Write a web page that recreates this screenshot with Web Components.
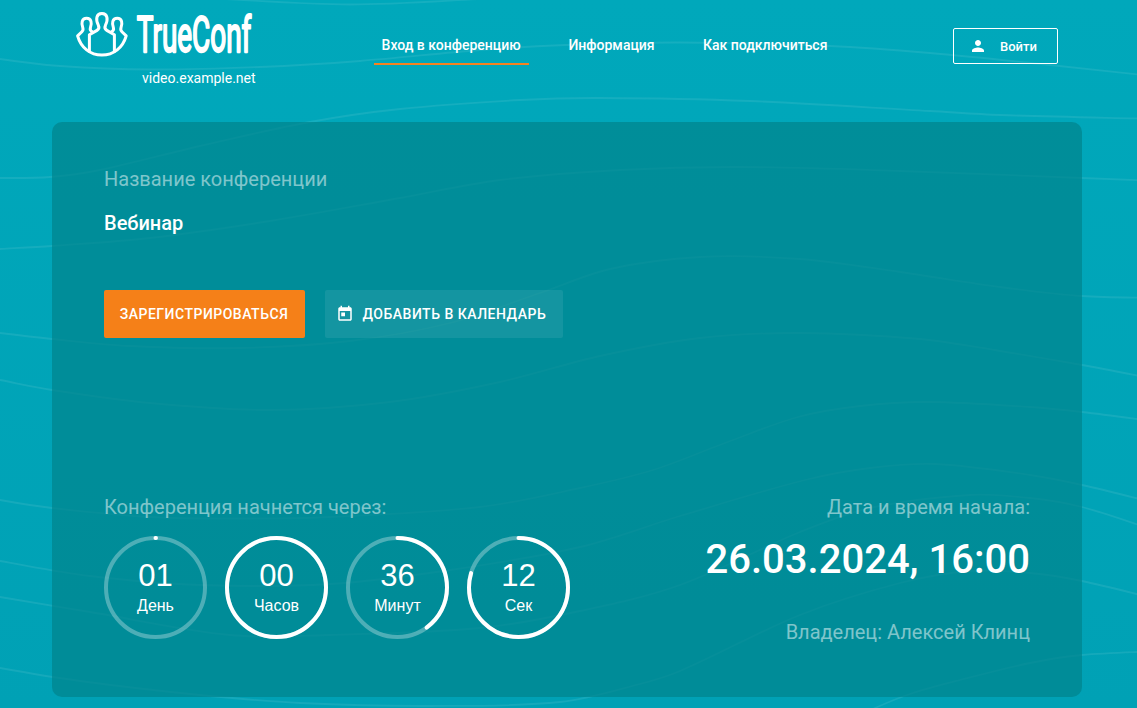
<!DOCTYPE html>
<html lang="ru">
<head>
<meta charset="utf-8">
<title>Вебинар</title>
<style>
html,body{margin:0;height:100%}
body{font-family:Roboto,"Liberation Sans",sans-serif;color:#fff;overflow:hidden}
</style>
</head>
<body>
<conference-page>
  <brand-logo slot="header">video.example.net</brand-logo>
  <site-nav slot="header">
    <nav-link active>Вход в конференцию</nav-link>
    <nav-link>Информация</nav-link>
    <nav-link>Как подключиться</nav-link>
  </site-nav>
  <login-button slot="header">Войти</login-button>
  <conference-card>
    <span slot="label">Название конференции</span>
    <span slot="title">Вебинар</span>
    <action-button slot="actions" primary>ЗАРЕГИСТРИРОВАТЬСЯ</action-button>
    <action-button slot="actions" calendar>ДОБАВИТЬ В КАЛЕНДАРЬ</action-button>
    <span slot="countdown">Конференция начнется через:</span>
    <count-ring slot="rings" value="01" part-of="0.0015">День</count-ring>
    <count-ring slot="rings" value="00" part-of="1">Часов</count-ring>
    <count-ring slot="rings" value="36" part-of="0.4">Минут</count-ring>
    <count-ring slot="rings" value="12" part-of="0.797">Сек</count-ring>
    <span slot="when">Дата и время начала:</span>
    <span slot="date">26.03.2024, 16:00</span>
    <span slot="owner">Владелец: Алексей Клинц</span>
  </conference-card>
</conference-page>
<script>
function define(name, html, setup) {
  customElements.define(name, class extends HTMLElement {
    constructor() {
      super();
      this.attachShadow({mode: 'open'}).innerHTML = html;
    }
    connectedCallback() { if (setup) setup(this, this.shadowRoot); }
  });
}

// Smooth wave lines, each a list of x,y points
const waves = [
  [205,-2, 350,4.5, 500,-2],
  [-20,54, 0,59, 60,66, 150,69.5, 260,67, 360,61, 480,50, 565,45, 680,42.5, 830,46, 930,53, 1050,65, 1160,77],
  [-20,177.5, 0,178, 50,177, 100,170, 200,146, 310,122, 400,109, 520,100, 600,98, 750,101, 930,111, 1000,115, 1160,119],
  [-20,250, 0,249, 52,246, 150,238, 270,221, 400,198, 500,180, 620,170, 740,167, 900,171, 1082,178, 1160,181],
  [-20,330, 0,333, 52,339, 130,346, 240,348, 350,341, 450,323, 540,293, 610,269, 700,257, 800,259, 900,272, 1000,287, 1082,296, 1160,298],
  [-20,376, 0,380, 52,390, 150,403, 270,410, 390,402, 500,382, 600,356, 700,338, 800,333, 920,339, 1000,351, 1082,365, 1160,380],
  [-20,495, 0,500, 52,508, 150,517, 250,518.5, 330,517, 480,507, 580,488, 653,470, 725,443, 798,417, 860,406, 928,402, 1030,407, 1082,412, 1160,422],
  [-20,557, 0,561, 90,576, 200,585, 330,584, 450,570, 580,547, 680,516, 805,480, 870,468, 935,464, 1030,475, 1082,485, 1160,504],
  [-20,593, 0,597, 90,612, 230,635, 330,635, 480,628, 580,611, 680,585, 800,532, 870,508, 970,495, 1030,498, 1082,507, 1160,532],
  [-20,663, 0,668, 80,681, 200,695, 300,703, 430,706, 560,702, 640,684, 680,671, 800,615, 900,583, 970,571, 1030,573, 1082,581, 1160,600],
  [860,716, 875,708, 910,694, 960,680, 1030,663, 1082,655, 1160,651]
];
function curve(p) {
  const n = p.length / 2, at = i => { i = Math.max(0, Math.min(n - 1, i)); return [p[2 * i], p[2 * i + 1]]; };
  let d = `M${p[0]} ${p[1]}`;
  for (let i = 0; i < n - 1; i++) {
    const a = at(i - 1), b = at(i), c = at(i + 1), e = at(i + 2);
    const k = (c[0] - b[0]) / 3;
    const s1 = (c[1] - a[1]) / (c[0] - a[0]), s2 = (e[1] - b[1]) / (e[0] - b[0]);
    d += `C${b[0] + k} ${b[1] + k * s1} ${c[0] - k} ${c[1] - k * s2} ${c[0]} ${c[1]}`;
  }
  return d;
}

define('wave-lines', `
<style>:host{display:block;position:absolute;inset:0;overflow:hidden}svg{display:block}</style>
<svg width="1137" height="708" viewBox="0 0 1137 708" fill="none" stroke="#8fd6dc" stroke-opacity=".15" stroke-width="1.8">
${waves.map(w => `<path d="${curve(w)}"/>`).join('')}
</svg>`);

define('conference-page', `
<style>
:host{display:block;position:relative;height:708px;background:linear-gradient(#00a8bb,#00a1b5)}
main{position:relative;width:1030px;margin-left:52px}
header{display:flex;height:122px;align-items:flex-start}
</style>
<wave-lines></wave-lines>
<main><header><slot name="header"></slot></header><slot></slot></main>`);

define('brand-logo', `
<style>
:host{display:block;width:203.6px;margin-right:118.4px}
svg{display:block;margin-left:18px;overflow:visible}
.host{font-size:14px;line-height:20px;text-align:right;margin-top:6px}
</style>
<svg width="190" height="62" viewBox="70 0 190 62">
  <g fill="none" stroke="#fff" stroke-width="3" stroke-linejoin="round">
    <path d="M89.4 52.5V34.8L97 30.4C99.2 29.1 99.3 27.4 98.3 25.2C95.6 19.6 96 13.6 101.9 13.6C107.8 13.6 108.2 19.6 105.5 25.2C104.5 27.4 104.6 29.1 106.8 30.4L114.4 34.8V52.5"/>
    <path d="M92.8 32.2C90.2 31 89.8 29.6 90.4 27.8C92.1 23.3 91.5 18.2 86.6 18.2C81.7 18.2 81.1 23.3 82.8 27.8C83.4 29.6 83.1 30.8 81.6 32L77.6 35.8C80.9 47.6 90.2 55 101.9 55C113.6 55 122.9 47.6 126.2 35.8L122.2 32C120.7 30.8 120.4 29.6 121 27.8C122.7 23.3 122.1 18.2 117.2 18.2C112.3 18.2 111.7 23.3 113.4 27.8C114 29.6 113.6 31 111 32.2"/>
  </g>
  <text transform="translate(136.8 52.3) scale(.53 1)" textLength="216" lengthAdjust="spacingAndGlyphs" font-family="Roboto" font-size="49.5" font-weight="400" fill="#fff" stroke="#fff" stroke-width="1.8" stroke-linejoin="round" vector-effect="non-scaling-stroke">TrueConf</text>
</svg>
<div class="host"><slot></slot></div>`);

define('site-nav', `
<style>:host{display:flex;gap:32px;padding-top:28px;width:579px;box-sizing:border-box}</style><slot></slot>`);

define('nav-link', `
<style>
:host{display:block;height:35px;line-height:34px;padding:0 8.3px 0 7.6px;font-size:14px;font-weight:500;white-space:nowrap;border-bottom:2px solid transparent}
:host([active]){border-color:#f58220}
:host(:last-child){margin-left:.5px}
</style><slot></slot>`);

define('login-button', `
<style>
:host{display:flex;align-items:center;box-sizing:border-box;width:105px;height:36px;margin-top:28px;border:1px solid #fff;border-radius:2px;padding-left:15px;font-size:13px;font-weight:500}
svg{display:block;margin-right:13px}
span{padding-top:1px}
</style>
<svg width="18" height="18" viewBox="0 0 24 24" fill="#fff"><path d="M12 12c2.21 0 4-1.79 4-4s-1.79-4-4-4-4 1.79-4 4 1.79 4 4 4zm0 2c-2.67 0-8 1.34-8 4v2h16v-2c0-2.66-5.33-4-8-4z"/></svg>
<span><slot></slot></span>`);

define('conference-card', `
<style>
:host{display:flex;flex-direction:column;justify-content:space-between;box-sizing:border-box;height:575px;padding:44px 52px 52px;border-radius:10px;background:rgba(0,131,140,.7)}
.label{font-size:20px;line-height:26px;color:rgba(255,255,255,.5)}
.title{font-size:20px;line-height:26px;font-weight:500;margin-top:18px}
.actions{display:flex;gap:20px;margin-top:54px}
.bottom{display:flex;justify-content:space-between}
.rings{display:flex;gap:18px;margin-top:16px}
.right{text-align:right}
.date{font-size:40px;line-height:48px;font-weight:500;margin-top:16px}
.owner{margin-top:35px}
.bottom{height:151px;padding-bottom:6px;box-sizing:border-box}
</style>
<section>
  <div class="label"><slot name="label"></slot></div>
  <div class="title"><slot name="title"></slot></div>
  <div class="actions"><slot name="actions"></slot></div>
</section>
<section class="bottom">
  <div><div class="label"><slot name="countdown"></slot></div><div class="rings"><slot name="rings"></slot></div></div>
  <div class="right">
    <div class="label"><slot name="when"></slot></div>
    <div class="date"><slot name="date"></slot></div>
    <div class="label owner"><slot name="owner"></slot></div>
  </div>
</section>`);

define('action-button', `
<style>
:host{display:flex;align-items:center;box-sizing:border-box;height:48px;width:238px;padding-left:11px;border-radius:2px;background:rgba(255,255,255,.08);font-size:14px;font-weight:500;letter-spacing:.5px;white-space:nowrap}
:host([primary]){width:201px;padding-left:15.7px;background:#f58018}
svg{display:none;margin-right:8.5px}
:host([calendar]) svg{display:block}
</style>
<svg width="18" height="18" viewBox="0 0 24 24" fill="#fff"><path d="M19 3h-1V1h-2v2H8V1H6v2H5c-1.11 0-1.99.9-1.99 2L3 19c0 1.1.89 2 2 2h14c1.1 0 2-.9 2-2V5c0-1.1-.9-2-2-2zm0 16H5V8h14v11zM7 10h5v5H7z"/></svg>
<span><slot></slot></span>`);

define('count-ring', `
<style>
:host{display:grid;width:103px;height:103px;text-align:center;font-family:"Liberation Sans",Arial,sans-serif}
svg,.text{grid-area:1/1}
.value{font-size:31px;line-height:36px;padding-top:22px;letter-spacing:-.1px}
.unit{font-size:16px;line-height:20px;margin-top:2px}
</style>
<svg width="103" height="103" viewBox="0 0 103 103" fill="none" stroke="#fff" stroke-width="4">
<circle cx="51.5" cy="51.5" r="49.5" stroke-opacity=".3"/>
<circle class="arc" cx="51.5" cy="51.5" r="49.5" pathLength="100" stroke-linecap="round" transform="rotate(-90 51.5 51.5)"/>
</svg>
<div class="text"><div class="value"></div><div class="unit"><slot></slot></div></div>`,
(host, root) => {
  root.querySelector('.value').textContent = host.getAttribute('value');
  root.querySelector('.arc').setAttribute('stroke-dasharray', `${host.getAttribute('part-of') * 100} 100`);
});
</script>
</body>
</html>
